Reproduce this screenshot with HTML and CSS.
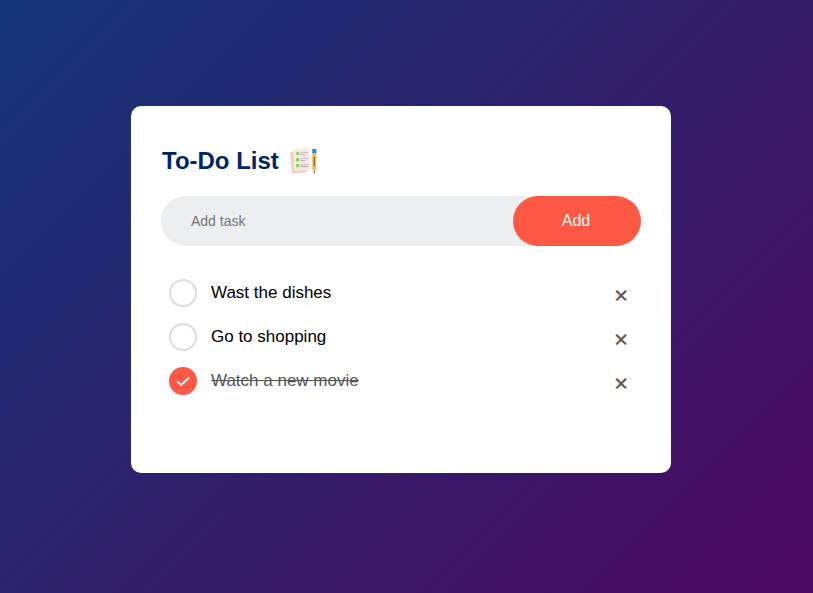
FILE: index.html
```html
<!DOCTYPE html>
<html lang="en">
<head>
<meta charset="utf-8">
<title>To-Do List</title>
<link rel="stylesheet" href="styles.css">
</head>
<body>
<div class="container">
  <main class="todo-app">
    <h2>To-Do List
      <svg class="title-icon" viewBox="0 0 30 30" aria-hidden="true">
        <path d="M1 6L16 5L18 26L3 27.5Z" fill="#fdccc2"/>
        <path d="M5 3L20.5 2.5L21 24.5L5 25Z" fill="#fee7df"/>
        <g fill="#48ef48"><circle cx="8.6" cy="7.6" r="1.7"/><circle cx="8.6" cy="13.7" r="1.7"/><circle cx="8.6" cy="19.7" r="1.7"/></g>
        <path d="M11.2 6.6h8M11.2 12.6h8M11.2 18.8h8" stroke="#c9b9c5"/>
        <path d="M11.2 8.6h5M11.2 14.6h5M11.2 20.6h8" stroke="#b8a3b8" stroke-width=".9"/>
        <path d="M23.3 6h4v18h-4z" fill="#f9b649"/>
        <path d="M25.3 11v9" stroke="#806443" stroke-width="1.2"/>
        <path d="M23.3 3h4v4h-4z" fill="#1687ee"/>
        <path d="M23.3 23.3h4L25.3 27.5Z" fill="#e9b9b8"/>
        <path d="M24.5 25.7h1.6l-.8 2z" fill="#343044"/>
      </svg>
    </h2>
    <form class="row">
      <input type="text" placeholder="Add task">
      <button type="button">Add</button>
    </form>
    <ul>
      <li><i class="check"></i>Wast the dishes<span>×</span></li>
      <li><i class="check"></i>Go to shopping<span>×</span></li>
      <li class="checked"><i class="check"><svg viewBox="0 0 28 28"><path d="M8.3 14.4l3.7 3.6 8-7.2"/></svg></i><s>Watch a new movie</s><span>×</span></li>
    </ul>
  </main>
</div>
</body>
</html>
```
FILE: styles.css
```css
* { margin: 0; padding: 0; box-sizing: border-box; font-family: "Liberation Sans", Arial, sans-serif; }
.container { min-height: 100vh; padding: 10px; background: linear-gradient(135deg, #153677, #4c0860); }
.todo-app { width: 540px; height: 367px; margin: 96px 0 0 121px; padding: 40px 30px 70px; background: #fff; border-radius: 10px; }
h2 { display: flex; align-items: center; height: 30px; margin-bottom: 20px; padding-left: 1px; color: #002765; font-size: 24px; }
.title-icon { width: 30px; height: 30px; margin-left: 10px; }
.row { display: flex; height: 50px; margin-bottom: 25px; border-radius: 30px; background: #edeef0; }
input { flex: 1; min-width: 0; padding-left: 30px; border: 0; outline: 0; background: transparent; font-size: 14px; }
button { width: 128px; padding-right: 2px; border: 0; border-radius: 40px; background: #ff5945; color: #fff; font-size: 16px; }
ul { list-style: none; }
li { display: flex; align-items: center; height: 44px; padding-left: 8px; font-size: 17px; }
.check { width: 28px; height: 28px; margin-right: 14px; border: 2px solid #ddd; border-radius: 50%; }
li span { width: 40px; height: 40px; margin-left: auto; font: 400 24px/44px "Open Sans", sans-serif; text-align: center; color: #555; -webkit-text-stroke: .4px #555; }
.checked { color: #555; }
.checked .check { border: 0; background: #ff5945; }
.check svg { display: block; fill: none; stroke: #fff; stroke-width: 2; }
```
